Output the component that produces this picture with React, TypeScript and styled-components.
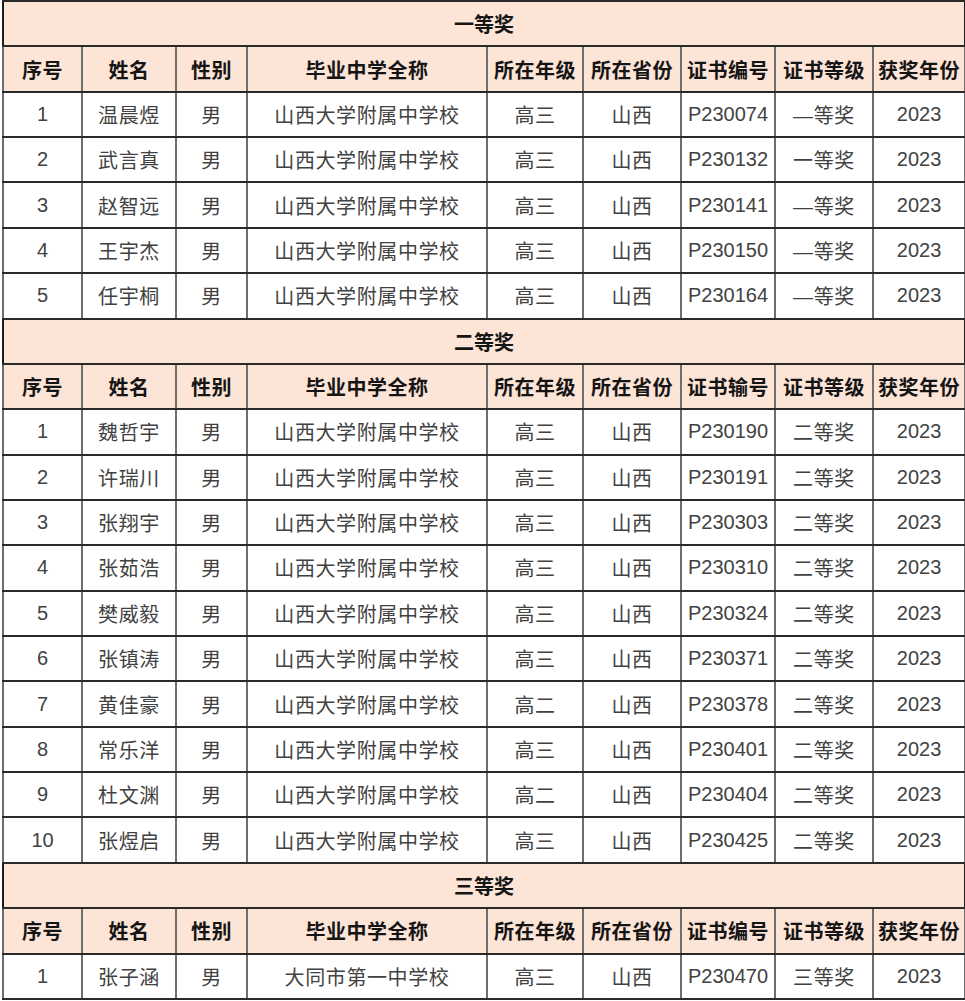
import React from 'react';
import styled, { createGlobalStyle } from 'styled-components';

const GlobalStyle = createGlobalStyle`
  html, body {
    margin: 0;
    padding: 0;
    background: #ffffff;
  }
`;

const Page = styled.div`
  padding: 0 1px 0 2px;
  font-family: "Liberation Sans", "Noto Sans CJK SC", sans-serif;
`;

const Table = styled.table`
  width: 962px;
  border-collapse: collapse;
  table-layout: fixed;
  border: 2px solid #1c1c1c;
`;

const Row = styled.tr`
  height: 45.36px;
`;

const Cell = styled.td<{ $head?: boolean; $num?: boolean }>`
  padding: 0;
  text-align: center;
  vertical-align: middle;
  font-size: 20px;
  letter-spacing: ${p => (p.$num ? '0' : p.$head ? '0.5px' : '0.6px')};
  white-space: nowrap;
  overflow: hidden;
  color: ${p => (p.$head ? '#151515' : '#424242')};
  font-weight: ${p => (p.$head ? 700 : 400)};
  background: ${p => (p.$head ? '#fce4d6' : '#ffffff')};
  border-top: 2px solid #2a2a2a;
  border-bottom: 2px solid #2a2a2a;
  border-left: 2px solid #6e6e6e;
  border-right: 2px solid #6e6e6e;
`;

const TitleCell = styled.td`
  padding: 0;
  text-align: center;
  font-size: 20px;
  font-weight: 700;
  color: #151515;
  background: #fce4d6;
  border-top: 2px solid #2a2a2a;
  border-bottom: 2px solid #2a2a2a;
`;

const widths = [79, 94, 71, 240, 96, 98, 94, 98, 92];

const heads = ['序号', '姓名', '性别', '毕业中学全称', '所在年级', '所在省份', '证书编号', '证书等级', '获奖年份'];

type Student = [string, string, string, string, string];

const school = '山西大学附属中学校';

const sections: { title: string; codeLabel: string; rows: Student[] }[] = [
  {
    title: '一等奖',
    codeLabel: '证书编号',
    rows: [
      ['温晨煜', school, '高三', 'P230074', '—等奖'],
      ['武言真', school, '高三', 'P230132', '一等奖'],
      ['赵智远', school, '高三', 'P230141', '—等奖'],
      ['王宇杰', school, '高三', 'P230150', '—等奖'],
      ['任宇桐', school, '高三', 'P230164', '—等奖'],
    ],
  },
  {
    title: '二等奖',
    codeLabel: '证书输号',
    rows: [
      ['魏哲宇', school, '高三', 'P230190', '二等奖'],
      ['许瑞川', school, '高三', 'P230191', '二等奖'],
      ['张翔宇', school, '高三', 'P230303', '二等奖'],
      ['张茹浩', school, '高三', 'P230310', '二等奖'],
      ['樊威毅', school, '高三', 'P230324', '二等奖'],
      ['张镇涛', school, '高三', 'P230371', '二等奖'],
      ['黄佳豪', school, '高二', 'P230378', '二等奖'],
      ['常乐洋', school, '高三', 'P230401', '二等奖'],
      ['杜文渊', school, '高二', 'P230404', '二等奖'],
      ['张煜启', school, '高三', 'P230425', '二等奖'],
    ],
  },
  {
    title: '三等奖',
    codeLabel: '证书编号',
    rows: [['张子涵', '大同市第一中学校', '高三', 'P230470', '三等奖']],
  },
];

export default function App() {
  return (
    <Page>
      <GlobalStyle />
      <Table>
        <colgroup>
          {widths.map((w, i) => (
            <col key={i} style={{ width: w }} />
          ))}
        </colgroup>
        <tbody>
          {sections.map(sec => (
            <React.Fragment key={sec.title}>
              <Row>
                <TitleCell colSpan={9}>{sec.title}</TitleCell>
              </Row>
              <Row>
                {heads.map((h, i) => (
                  <Cell $head key={h}>
                    {i === 6 ? sec.codeLabel : h}
                  </Cell>
                ))}
              </Row>
              {sec.rows.map((r, idx) => (
                <Row key={r[3]}>
                  <Cell $num>{idx + 1}</Cell>
                  <Cell>{r[0]}</Cell>
                  <Cell>男</Cell>
                  <Cell>{r[1]}</Cell>
                  <Cell>{r[2]}</Cell>
                  <Cell>山西</Cell>
                  <Cell $num>{r[3]}</Cell>
                  <Cell>{r[4]}</Cell>
                  <Cell $num>2023</Cell>
                </Row>
              ))}
            </React.Fragment>
          ))}
        </tbody>
      </Table>
    </Page>
  );
}
